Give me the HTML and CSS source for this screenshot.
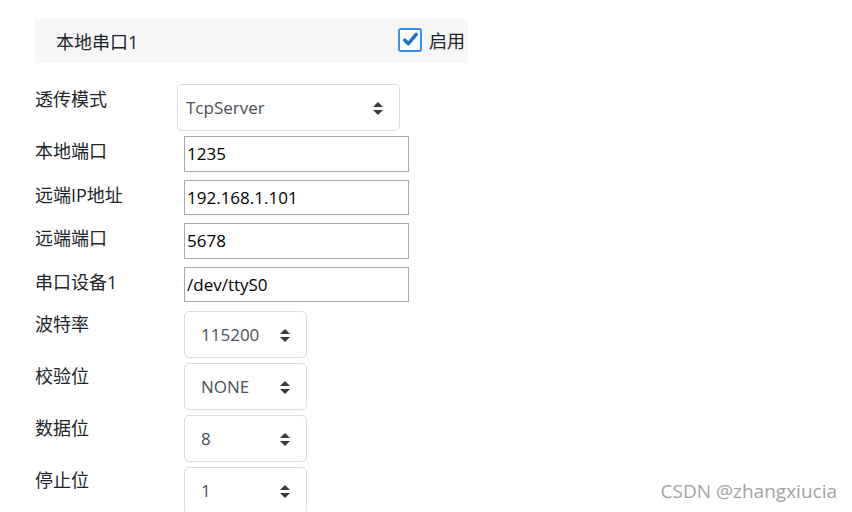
FILE: index.html
```html
<!DOCTYPE html>
<html lang="zh">
<head>
<meta charset="utf-8">
<link rel="stylesheet" href="styles.css">
</head>
<body>
<div class="page">
  <div class="head">
    <span class="title">本地串口1</span>
    <label class="enable"><span class="check"><svg viewBox="0 0 16 16" width="17" height="17"><path d="M2.5 8.5 L6 12 L13.5 3" fill="none" stroke="#1a6fd1" stroke-width="3.2" stroke-linecap="round" stroke-linejoin="round"/></svg></span>启用</label>
  </div>
  <div class="form">
    <div class="row r-mode"><div class="lbl">透传模式</div><div class="sel wide">TcpServer<i class="arr"></i></div></div>
    <div class="row r-in first"><div class="lbl">本地端口</div><div class="inp">1235</div></div>
    <div class="row r-in"><div class="lbl">远端IP地址</div><div class="inp">192.168.1.101</div></div>
    <div class="row r-in"><div class="lbl">远端端口</div><div class="inp">5678</div></div>
    <div class="row r-in"><div class="lbl">串口设备1</div><div class="inp">/dev/ttyS0</div></div>
    <div class="row r-sm firstsm"><div class="lbl">波特率</div><div class="sel small">115200<i class="arr"></i></div></div>
    <div class="row r-sm"><div class="lbl">校验位</div><div class="sel small">NONE<i class="arr"></i></div></div>
    <div class="row r-sm"><div class="lbl">数据位</div><div class="sel small">8<i class="arr"></i></div></div>
    <div class="row r-sm"><div class="lbl">停止位</div><div class="sel small">1<i class="arr"></i></div></div>
  </div>
  <div class="mark">CSDN @zhangxiucia</div>
</div>
</body>
</html>
```
FILE: styles.css
```css
* { box-sizing: border-box; }
html, body { margin: 0; padding: 0; background: #fff; }
body {
  font-family: "Open Sans", "Noto Sans CJK SC", sans-serif;
  color: #212529;
  width: 852px;
  height: 512px;
  overflow: hidden;
}
.page { position: relative; padding: 19px 0 0 35px; height: 512px; }
.head {
  width: 433px;
  height: 44px;
  background: #f7f7f7;
  display: flex;
  align-items: center;
  justify-content: space-between;
  padding: 0 3px 0 21px;
  font-size: 18px;
}
.title { color: #212529; }
.enable { display: flex; align-items: center; gap: 7px; color: #212529; margin-top: -3px; }
.check {
  width: 24px; height: 24px;
  border: 2px solid #3b8eea;
  border-radius: 3px;
  background: #fff;
  display: flex; align-items: center; justify-content: center;
}
.form { display: flex; flex-direction: column; }
.row { display: flex; align-items: flex-start; }
.lbl { width: 142px; font-size: 18px; line-height: 26px; color: #212529; flex: none; }
.r-mode { margin-top: 21px; }
.r-mode .lbl { padding-top: 2px; }
.r-in { margin-top: 8px; }
.r-in.first { margin-top: 5px; }
.r-in .lbl { padding-top: 2px; }
.r-sm { margin-top: 5px; }
.r-sm.firstsm { margin-top: 9px; }
.r-sm .lbl { padding-top: 0; }
.sel {
  position: relative;
  height: 47px;
  border: 1px solid #dadde1;
  border-radius: 5px;
  background: #fff;
  color: #495057;
  font-size: 17px;
  display: flex;
  align-items: center;
}
.sel.wide { width: 223px; padding-left: 8px; }
.sel.small { width: 123px; margin-left: 7px; padding-left: 16px; }
.arr {
  position: absolute;
  right: 16px;
  top: 50%;
  width: 10px;
  height: 13px;
  margin-top: -6px;
}
.arr::before, .arr::after {
  content: "";
  position: absolute;
  left: 0;
  border-left: 5px solid transparent;
  border-right: 5px solid transparent;
}
.arr::before { top: 0; border-bottom: 5px solid #343a40; }
.arr::after { bottom: 0; border-top: 5px solid #343a40; }
.inp {
  width: 225px;
  height: 35.5px;
  margin-left: 7px;
  border: 1px solid #a9a9a9;
  padding-left: 2px;
  font-size: 17px;
  color: #000;
  display: flex;
  align-items: center;
}
.mark {
  position: absolute;
  right: 15px;
  bottom: 8px;
  font-size: 19px;
  color: #a3a3a3;
}
```
